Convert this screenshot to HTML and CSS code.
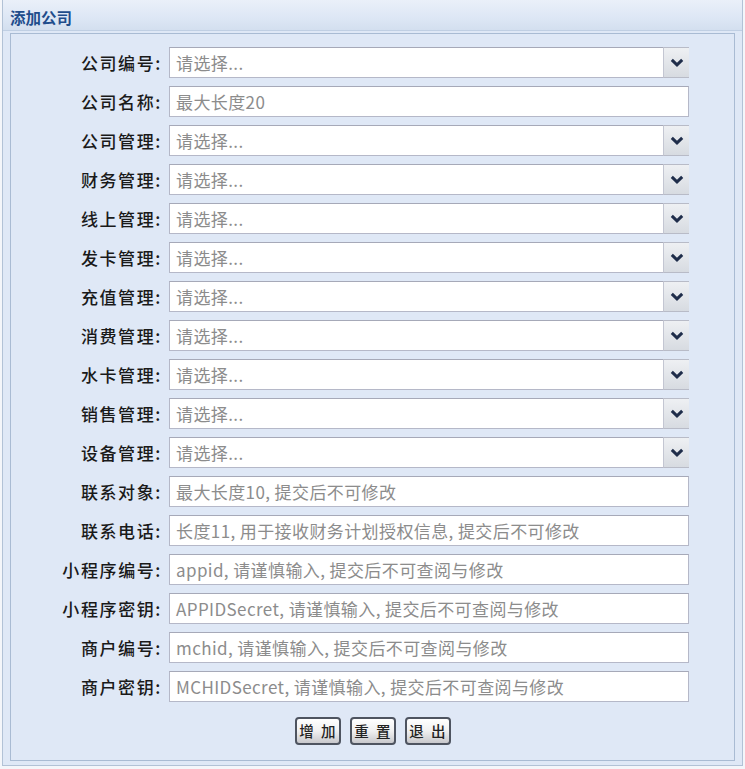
FILE: index.html
```html
<!DOCTYPE html>
<html>
<head>
<meta charset="utf-8">
<link rel="stylesheet" href="styles.css">
</head>
<body>
<div class="panel">
  <div class="header"><span class="title">添加公司</span></div>
  <div class="frame">
    <div class="inner">
      <div class="form">
        <label>公司编号:</label><div class="field select"><span>请选择...</span><i class="trigger"><svg width="14" height="9" viewBox="0 0 14 9"><path d="M1.8 1.8 L7 6.8 L12.2 1.8" fill="none" stroke="#1f2d4a" stroke-width="3"/></svg></i></div>
        <label>公司名称:</label><div class="field"><span>最大长度20</span></div>
        <label>公司管理:</label><div class="field select"><span>请选择...</span><i class="trigger"><svg width="14" height="9" viewBox="0 0 14 9"><path d="M1.8 1.8 L7 6.8 L12.2 1.8" fill="none" stroke="#1f2d4a" stroke-width="3"/></svg></i></div>
        <label>财务管理:</label><div class="field select"><span>请选择...</span><i class="trigger"><svg width="14" height="9" viewBox="0 0 14 9"><path d="M1.8 1.8 L7 6.8 L12.2 1.8" fill="none" stroke="#1f2d4a" stroke-width="3"/></svg></i></div>
        <label>线上管理:</label><div class="field select"><span>请选择...</span><i class="trigger"><svg width="14" height="9" viewBox="0 0 14 9"><path d="M1.8 1.8 L7 6.8 L12.2 1.8" fill="none" stroke="#1f2d4a" stroke-width="3"/></svg></i></div>
        <label>发卡管理:</label><div class="field select"><span>请选择...</span><i class="trigger"><svg width="14" height="9" viewBox="0 0 14 9"><path d="M1.8 1.8 L7 6.8 L12.2 1.8" fill="none" stroke="#1f2d4a" stroke-width="3"/></svg></i></div>
        <label>充值管理:</label><div class="field select"><span>请选择...</span><i class="trigger"><svg width="14" height="9" viewBox="0 0 14 9"><path d="M1.8 1.8 L7 6.8 L12.2 1.8" fill="none" stroke="#1f2d4a" stroke-width="3"/></svg></i></div>
        <label>消费管理:</label><div class="field select"><span>请选择...</span><i class="trigger"><svg width="14" height="9" viewBox="0 0 14 9"><path d="M1.8 1.8 L7 6.8 L12.2 1.8" fill="none" stroke="#1f2d4a" stroke-width="3"/></svg></i></div>
        <label>水卡管理:</label><div class="field select"><span>请选择...</span><i class="trigger"><svg width="14" height="9" viewBox="0 0 14 9"><path d="M1.8 1.8 L7 6.8 L12.2 1.8" fill="none" stroke="#1f2d4a" stroke-width="3"/></svg></i></div>
        <label>销售管理:</label><div class="field select"><span>请选择...</span><i class="trigger"><svg width="14" height="9" viewBox="0 0 14 9"><path d="M1.8 1.8 L7 6.8 L12.2 1.8" fill="none" stroke="#1f2d4a" stroke-width="3"/></svg></i></div>
        <label>设备管理:</label><div class="field select"><span>请选择...</span><i class="trigger"><svg width="14" height="9" viewBox="0 0 14 9"><path d="M1.8 1.8 L7 6.8 L12.2 1.8" fill="none" stroke="#1f2d4a" stroke-width="3"/></svg></i></div>
        <label>联系对象:</label><div class="field"><span>最大长度10, 提交后不可修改</span></div>
        <label>联系电话:</label><div class="field"><span>长度11, 用于接收财务计划授权信息, 提交后不可修改</span></div>
        <label>小程序编号:</label><div class="field"><span>appid, 请谨慎输入, 提交后不可查阅与修改</span></div>
        <label>小程序密钥:</label><div class="field"><span>APPIDSecret, 请谨慎输入, 提交后不可查阅与修改</span></div>
        <label>商户编号:</label><div class="field"><span>mchid, 请谨慎输入, 提交后不可查阅与修改</span></div>
        <label>商户密钥:</label><div class="field"><span>MCHIDSecret, 请谨慎输入, 提交后不可查阅与修改</span></div>
      </div>
      <div class="buttons">
        <button class="btn">增 加</button>
        <button class="btn">重 置</button>
        <button class="btn">退 出</button>
      </div>
    </div>
  </div>
</div>
</body>
</html>
```
FILE: styles.css
```css
html, body {
  margin: 0;
  padding: 0;
  background: #f4f6fa;
}
body {
  width: 745px;
  height: 769px;
  overflow: hidden;
  font-family: "Noto Sans CJK SC", "Noto Sans", sans-serif;
}
.panel {
  margin: 0 2px 0 2px;
  height: 766px;
  border-left: 1px solid #b2c2d6;
  border-right: 1px solid #b2c2d6;
  border-bottom: 1px solid #b2c2d6;
  box-sizing: border-box;
  display: flex;
  flex-direction: column;
  background: #dfe8f6;
}
.header {
  height: 31px;
  flex: none;
  box-sizing: border-box;
  padding: 5px 0 0 7px;
  background: linear-gradient(to bottom, #eaf0f9 0%, #dde7f5 60%, #d3dfef 100%);
  border-bottom: 1px solid #c0cfe3;
}
.title {
  font-size: 15.5px;
  font-weight: bold;
  color: #1f4d8c;
  line-height: 20px;
}
.frame {
  flex: 1;
  padding: 2px 7px 4px 7px;
  display: flex;
}
.inner {
  flex: 1;
  border: 1px solid #a9bbd3;
  background: #dfe8f6;
  padding-top: 13px;
  box-sizing: border-box;
}
.form {
  display: grid;
  grid-template-columns: 151px 520px;
  column-gap: 7px;
  row-gap: 8px;
}
.form label {
  text-align: right;
  font-size: 17px;
  font-weight: 500;
  color: #1a1a1a;
  line-height: 31px;
  letter-spacing: 1.6px;
}
.field {
  height: 31px;
  box-sizing: border-box;
  background: #fff;
  border: 1px solid #b5b8c8;
  border-top-color: #a6a9b8;
  display: flex;
  align-items: center;
  padding-left: 6px;
  position: relative;
  font-size: 17px;
  color: #8c8c8c;
  letter-spacing: 0.4px;
}
.field span {
  flex: 1;
  white-space: nowrap;
}
.trigger {
  width: 25px;
  align-self: stretch;
  margin: -1px -1px -1px 0;
  border-left: 1px solid #c3c6d2;
  background: linear-gradient(to bottom, #eef0f3, #d7dbe1);
  display: flex;
  align-items: center;
  justify-content: center;
  border-top: 1px solid #b8bbc7;
  border-bottom: 1px solid #b8bbc7;
}
.buttons {
  display: flex;
  justify-content: center;
  gap: 9px;
  margin-top: 15px;
}
.btn {
  height: 28px;
  width: 46px;
  padding: 0;
  border: 2px solid #4e5460;
  border-radius: 4px;
  background: linear-gradient(to bottom, #ffffff 0%, #f0f0f0 50%, #c8c8cc 100%);
  font-family: "Noto Sans CJK SC", sans-serif;
  font-size: 14.5px;
  font-weight: 500;
  color: #222;
  line-height: 22px;
  letter-spacing: 2px;
  text-indent: 2px;
}
```
